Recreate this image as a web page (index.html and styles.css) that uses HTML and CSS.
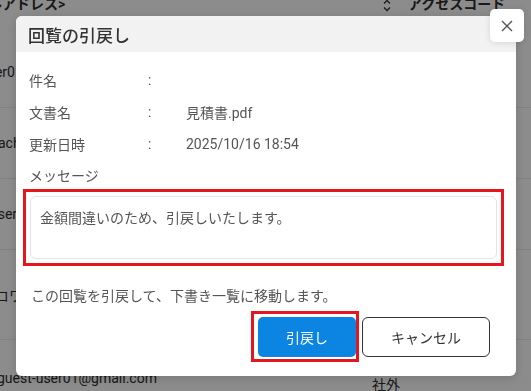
FILE: index.html
```html
<!DOCTYPE html>
<html lang="ja">
<head>
<meta charset="UTF-8">
<meta name="viewport" content="width=device-width, initial-scale=1.0">
<title>回覧の引戻し</title>
<link rel="stylesheet" href="styles.css">
</head>
<body>
<div class="page">
  <div class="list-head">
    <span class="head-mail">メールアドレス&gt;</span>
    <span class="head-code">
      <svg class="sort" width="8" height="13" viewBox="0 0 8 13">
        <path d="M1 4.5 L4 1.5 L7 4.5 M1 8.5 L4 11.5 L7 8.5" fill="none" stroke="#333" stroke-width="1.3"/>
      </svg>
      アクセスコード
    </span>
  </div>
  <div class="list-row row-a"><span class="cell-name">user01</span></div>
  <div class="list-row row-b"><span class="cell-name">teach</span></div>
  <div class="list-row row-c"><span class="cell-name">user0</span></div>
  <div class="list-row row-d"><span class="cell-name">コワ</span></div>
  <div class="list-row row-e">
    <span class="cell-mail">guest-user01@gmail.com</span>
    <span class="cell-kind">社外</span>
  </div>
</div>

<div class="overlay"></div>

<div class="modal">
  <div class="modal-header">
    <h2>回覧の引戻し</h2>
  </div>
  <button class="close-btn" aria-label="閉じる">
    <svg width="12" height="12" viewBox="0 0 12 12">
      <path d="M1 1 L11 11 M11 1 L1 11" stroke="#555" stroke-width="1.4" fill="none"/>
    </svg>
  </button>
  <div class="modal-body">
    <div class="info-row"><span class="info-label">件名</span><span class="info-colon">:</span><span class="info-value"></span></div>
    <div class="info-row"><span class="info-label">文書名</span><span class="info-colon">:</span><span class="info-value">見積書.pdf</span></div>
    <div class="info-row"><span class="info-label">更新日時</span><span class="info-colon">:</span><span class="info-value">2025/10/16 18:54</span></div>
    <div class="info-row info-last"><span class="info-label">メッセージ</span></div>
    <div class="mark message-mark">
      <textarea class="message" readonly>金額間違いのため、引戻しいたします。</textarea>
    </div>
    <p class="notice">この回覧を引戻して、下書き一覧に移動します。</p>
    <div class="actions">
      <div class="mark button-mark">
        <button class="btn-primary">引戻し</button>
      </div>
      <button class="btn-cancel">キャンセル</button>
    </div>
  </div>
</div>
</body>
</html>
```

FILE: styles.css
```css
body {
  margin: 0;
  padding: 0;
  font-family: Roboto, "Noto Sans CJK JP", sans-serif;
  background: #fff;
  overflow: hidden;
  height: 391px;
}
.page {
  color: #2e2e2e;
  font-size: 14px;
  height: 391px;
  overflow: hidden;
}
.list-head {
  display: flex;
  height: 44px;
  margin-top: -7px;
  font-weight: 600;
}
.head-mail {
  margin-left: -40px;
  width: 423px;
}
.head-code {
  display: flex;
  align-items: flex-start;
  gap: 17px;
}
.sort {
  margin-top: 6px;
}
.list-row {
  display: flex;
  align-items: center;
  border-bottom: 1px solid #ececec;
}
.row-a { height: 70px; }
.row-b { height: 70px; }
.row-c { height: 70px; }
.row-d { height: 89px; }
.row-e { height: 80px; align-items: flex-start; padding-top: 30px; }
.cell-name {
  margin-left: -20px;
}
.row-b .cell-name { margin-left: -14px; }
.row-c .cell-name { margin-left: -10px; }
.row-d .cell-name { margin-left: -5px; }
.cell-mail {
  margin-left: -3px;
  width: 375px;
}
.cell-kind {
  margin-top: 4px;
}
.overlay {
  position: fixed;
  inset: 0;
  background: rgba(0, 0, 0, 0.45);
}
.modal {
  position: absolute;
  left: 16px;
  top: 16px;
  width: 500px;
  background: #fff;
  border-radius: 6px;
  box-shadow: 0 2px 10px rgba(0, 0, 0, 0.15);
}
.modal-header {
  height: 36px;
  background: #f2f2f2;
  border-radius: 6px 6px 0 0;
  display: flex;
  align-items: center;
  padding-left: 12px;
}
.modal-header h2 {
  margin: 0;
  font-size: 17px;
  font-weight: 500;
  color: #333;
}
.close-btn {
  position: absolute;
  top: -7px;
  right: -8px;
  width: 34px;
  height: 33px;
  background: #fff;
  border: none;
  border-radius: 5px;
  box-shadow: 0 1px 6px rgba(0, 0, 0, 0.12);
  display: flex;
  align-items: center;
  justify-content: center;
  padding: 0;
  cursor: pointer;
}
.modal-body {
  padding: 12px 12px 14px 13px;
  color: #555;
  font-size: 14px;
}
.info-row {
  display: flex;
  height: 32px;
  align-items: center;
}
.info-last {
  height: 29px;
}
.info-label {
  width: 119px;
}
.info-colon {
  width: 38px;
}
.mark {
  border: 3px solid #e3171d;
}
.message-mark {
  margin-left: -6px;
  padding: 4px;
}
.message {
  display: block;
  width: 100%;
  height: 63px;
  box-sizing: border-box;
  border: 1px solid #e4e4e4;
  border-radius: 6px;
  padding: 10px 9px;
  font-family: Roboto, "Noto Sans CJK JP", sans-serif;
  font-size: 14px;
  color: #555;
  resize: none;
  outline: none;
}
.notice {
  margin: 20px 0 0 2px;
  line-height: 20px;
}
.actions {
  display: flex;
  justify-content: flex-end;
  align-items: flex-start;
  gap: 3px;
  margin-top: 5px;
  margin-right: 14px;
}
.button-mark {
  padding: 3px 0 2px 4px;
}
.btn-primary {
  display: block;
  width: 98px;
  height: 40px;
  background: #0b84e2;
  color: #fff;
  border: none;
  border-radius: 5px;
  font-family: Roboto, "Noto Sans CJK JP", sans-serif;
  font-size: 14px;
  cursor: pointer;
}
.btn-cancel {
  width: 128px;
  height: 40px;
  margin-top: 6px;
  background: #fff;
  color: #333;
  border: 1px solid #333;
  border-radius: 6px;
  font-family: Roboto, "Noto Sans CJK JP", sans-serif;
  font-size: 14px;
  cursor: pointer;
}
```
